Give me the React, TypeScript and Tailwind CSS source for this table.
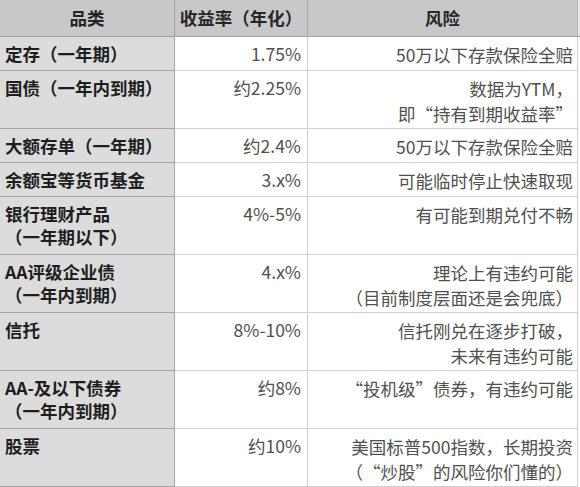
import React from "react";

type Row = { h: number; a: string[]; b: string; c: string[] };

const rows: Row[] = [
  { h: 34, a: ["定存（一年期）"], b: "1.75%", c: ["50万以下存款保险全赔"] },
  { h: 58, a: ["国债（一年内到期）"], b: "约2.25%", c: ["数据为YTM，", "即“持有到期收益率”"] },
  { h: 34, a: ["大额存单（一年期）"], b: "约2.4%", c: ["50万以下存款保险全赔"] },
  { h: 34, a: ["余额宝等货币基金"], b: "3.x%", c: ["可能临时停止快速取现"] },
  { h: 58, a: ["银行理财产品", "（一年期以下）"], b: "4%-5%", c: ["有可能到期兑付不畅"] },
  { h: 58, a: ["AA评级企业债", "（一年内到期）"], b: "4.x%", c: ["理论上有违约可能", "（目前制度层面还是会兜底）"] },
  { h: 58, a: ["信托"], b: "8%-10%", c: ["信托刚兑在逐步打破，", "未来有违约可能"] },
  { h: 58, a: ["AA-及以下债券", "（一年内到期）"], b: "约8%", c: ["“投机级”债券，有违约可能"] },
  { h: 58, a: ["股票"], b: "约10%", c: ["美国标普500指数，长期投资", "（“炒股”的风险你们懂的）"] },
];

const font = { fontFamily: '"Noto Sans CJK SC", "Noto Sans", sans-serif' };

function Txt({ t }: { t: string }) {
  const parts = t.split(/([“”])/);
  return (
    <>
      {parts.map((p, i) =>
        p === "“" ? (
          <span key={i} className="inline-block w-[1em] text-right">{p}</span>
        ) : p === "”" ? (
          <span key={i} className="inline-block w-[1em] text-left">{p}</span>
        ) : (
          <React.Fragment key={i}>{p}</React.Fragment>
        )
      )}
    </>
  );
}

export default function App() {
  return (
    <div className="w-[580px] h-[487px] bg-white overflow-hidden" style={font} lang="zh-Hans">
      <div className="flex h-[37px] bg-[#c8c8c8] border-b border-[#a4a4a4]">
        <div className="w-[175px] shrink-0 border-r border-[#a0a0a0] flex items-center justify-center text-[17.5px] font-bold text-[#262626]">品类</div>
        <div className="w-[133px] shrink-0 border-r border-[#a8a8a8] flex items-center justify-center text-[17.5px] font-bold text-[#262626]">收益率（年化）</div>
        <div className="w-[270px] shrink-0 border-r border-[#b4b4b4] flex items-center justify-center text-[17.5px] font-bold text-[#262626]">风险</div>
        <div className="flex-1 bg-[#e8e8e8]" />
      </div>
      {rows.map((r, i) => (
        <div key={i} className="flex" style={{ height: r.h }}>
          <div className="w-[175px] shrink-0 bg-[#dcdcdc] border-r border-b border-[#a4a4a4] pl-[5px] pt-[5px] text-[17.5px] leading-[23px] font-bold text-[#1e1e1e]">
            {r.a.map((t, j) => (
              <div key={j} className="whitespace-nowrap">{t}</div>
            ))}
          </div>
          <div className="w-[133px] shrink-0 border-r border-b border-[#cfcfcf] pr-[6px] pt-[5px] text-right text-[17.5px] leading-[24px] text-[#505050]">
            {r.b}
          </div>
          <div className="w-[270px] shrink-0 border-r border-b border-[#cfcfcf] pr-[4px] pt-[5px] text-right text-[17.5px] leading-[25px] text-[#505050]">
            {r.c.map((t, j) => (
              <div key={j} className="whitespace-nowrap"><Txt t={t} /></div>
            ))}
          </div>
          <div className="flex-1 bg-white" />
        </div>
      ))}
    </div>
  );
}
